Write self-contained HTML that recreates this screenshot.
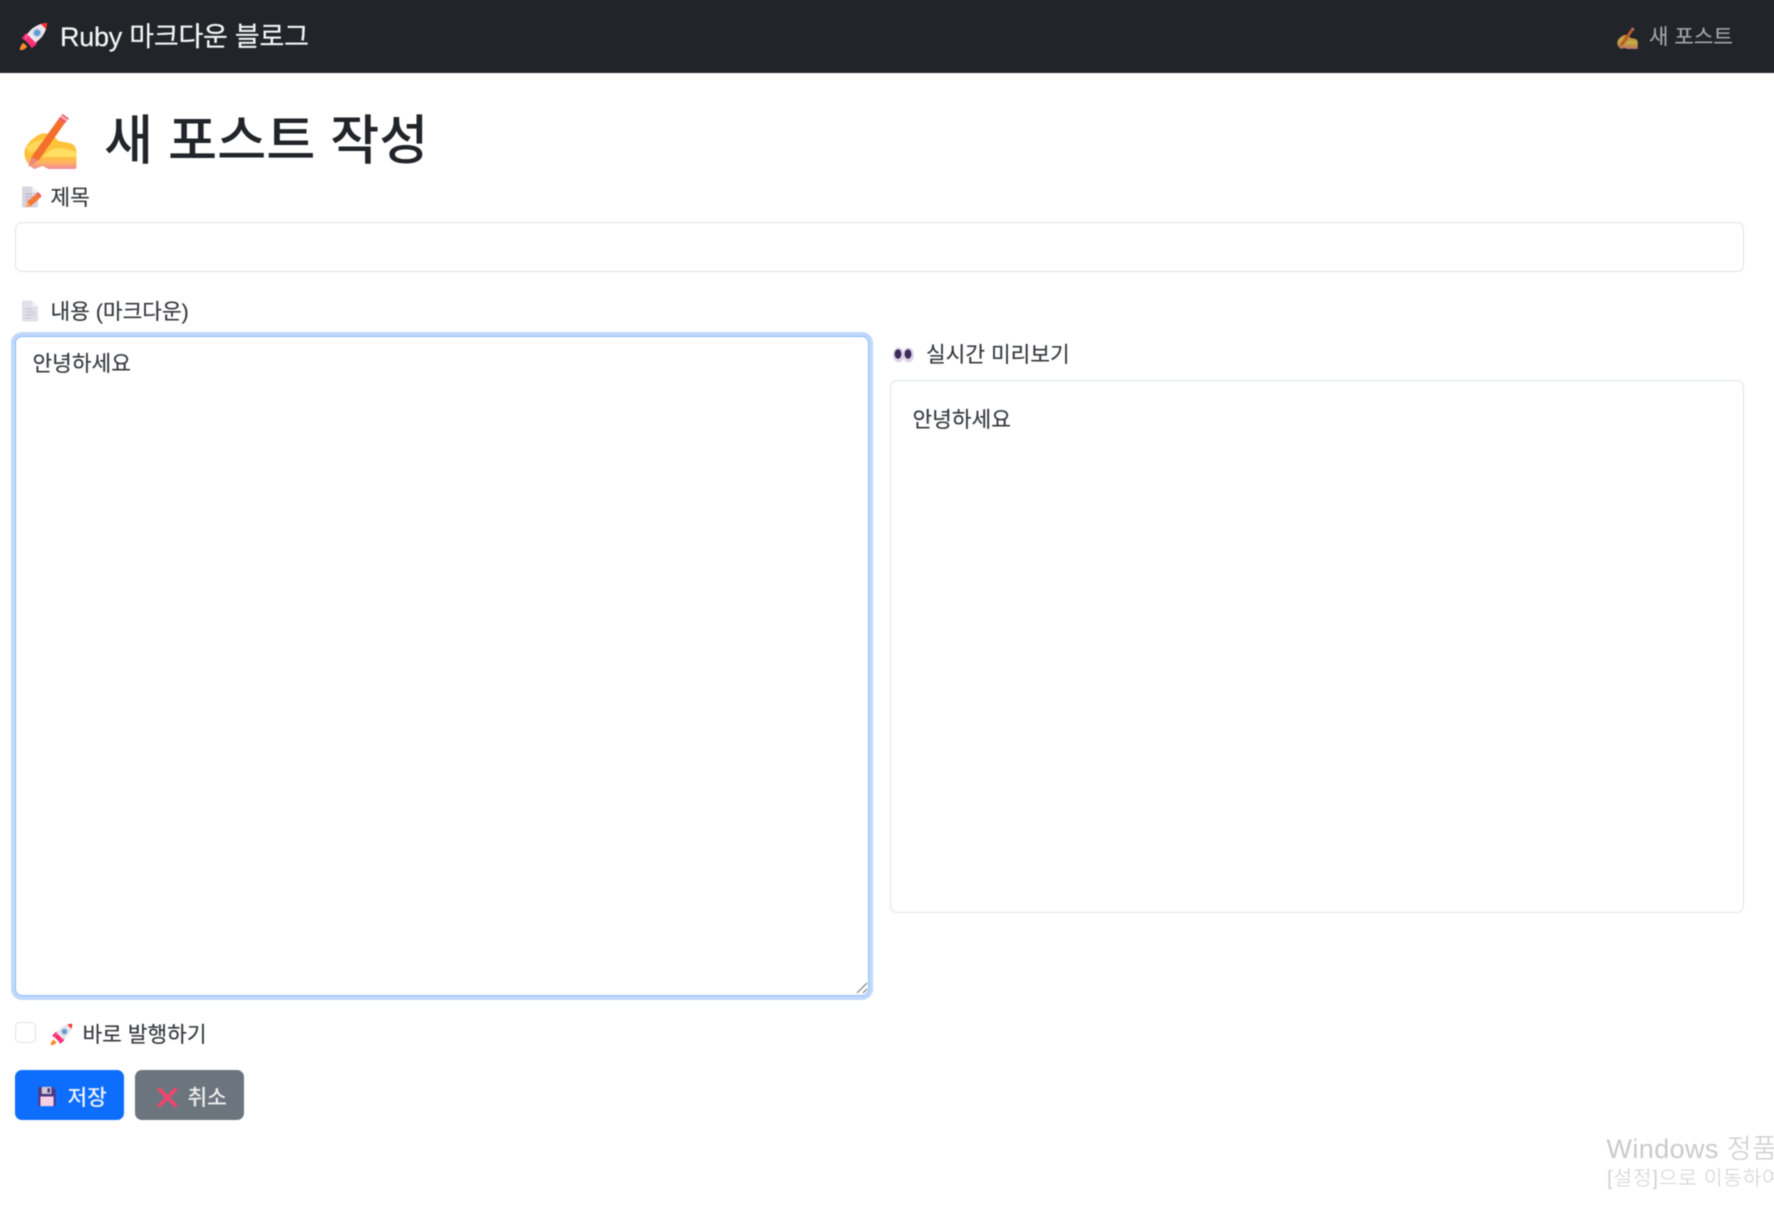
<!DOCTYPE html>
<html lang="ko">
<head>
<meta charset="utf-8">
<title>새 포스트 작성</title>
<style>
*{box-sizing:border-box}
html,body{margin:0;padding:0;background:#fff;width:1774px;height:1208px;overflow:hidden}
#root{font-family:"Liberation Sans","Noto Sans CJK KR",sans-serif;color:#212529;position:absolute;left:0;top:0;width:1774px;height:1208px;filter:blur(.45px)}
.a{position:absolute;white-space:nowrap;line-height:1}
nav{position:absolute;left:-10px;top:-10px;width:1794px;height:83px;background:#212529}
.box{position:absolute;background:#fff;border:1.5px solid #e0e3e6;border-radius:7px}
.btn{position:absolute;top:1070px;height:50px;width:109px;border-radius:7px}
svg{position:absolute;overflow:visible}
.t18{font-size:21.4px;color:#33383d;-webkit-text-stroke:.15px #33383d}
</style>
</head>
<body>
<div id="root">
<svg width="0" height="0" style="position:absolute">
<defs>
<linearGradient id="hg" x1="0" y1="0" x2="0" y2="1"><stop offset=".6" stop-color="#ffc23a"/><stop offset=".82" stop-color="#ffb45e"/><stop offset="1" stop-color="#f087a0"/></linearGradient>
<symbol id="rocket" viewBox="0 0 32 32">
<path d="M5 23c-3 2-4 5-4 8 3 0 6-1 8-4z" fill="#ff8a2b"/>
<path d="M7 13l7-2-6 10-5-3z" fill="#f7277a"/>
<path d="M19 25l2-7-10 6 3 5z" fill="#f7277a"/>
<path d="M6.500 20C9 10 18 2 31 1c-1 13-9 21-19 24.500z" fill="#e9e5ec"/>
<path d="M6.500 20c1-2 2-4 3-6l8.500 8.500c-2 1.200-4 2.200-6 3z" fill="#f92f70"/>
<path d="M24 2c2-.5 4-.8 7-1-.2 3-.5 5-1 7z" fill="#f8312f"/>
<circle cx="20" cy="12" r="4" fill="#5a9ad8" stroke="#b8c8dc" stroke-width="1.400"/>
</symbol>
<symbol id="hand" viewBox="0 0 56 56">
<path d="M2 38C4 30 13 22 21 20l9 2 6 6 11 2c5 1 7 5 7 10v14c0 1-1 2-2 2H26l-6-3-8 3C6 53 1 46 2 38z" fill="url(#hg)"/>
<path d="M20 44c5-6 11-9 17-9l12 2c3 1 5 2 5 5v2H28z" fill="#ffdf60"/>
<path d="M5 33c6-4 15-8 22-7 3 1 2 6-2 7l-15 6c-4 0-8-3-5-6z" fill="#ffd75a"/>
<path d="M6 54l3-10L36 6l6 4.500-26 37z" fill="#f3702c"/>
<path d="M36 6l4-5 6.500 4.500-4.500 5z" fill="#ef4f68"/>
<path d="M37.500 4l1.500-2 6.500 4.500-1.500 2z" fill="#f6b3a6"/>
<path d="M6 54l3-10 7 3.500z" fill="#e98a7d"/>
</symbol>
<symbol id="memo" viewBox="0 0 20 22">
<path d="M1 2c0-1 .5-1.500 1.500-1.500H11l6 6V20c0 1-.5 1.500-1.500 1.500h-13C1.500 21.500 1 21 1 20z" fill="#d9d5e0"/>
<path d="M11 .5l6 6h-5c-.6 0-1-.4-1-1z" fill="#f1eef4"/>
<path d="M4 8h7M4 11h9M4 14h5" stroke="#b4aec2" stroke-width="1"/>
<path d="M4 21l2-5 9-8 4 4-9 8z" fill="#f47a33"/>
<path d="M15 8l2-2 4 4-2 2z" fill="#f05a5e"/>
<path d="M4 21l2-5 3 3z" fill="#f3b08c"/>
</symbol>
<symbol id="doc" viewBox="0 0 18 22">
<path d="M1 2c0-1 .5-1.500 1.500-1.500H11l6 6V20c0 1-.5 1.500-1.500 1.500h-13C1.500 21.500 1 21 1 20z" fill="#e2dfe9"/>
<path d="M11 .5l6 6h-5c-.6 0-1-.4-1-1z" fill="#f3f1f6"/>
<path d="M4 9h7M4 12h10M4 15h10M4 18h6" stroke="#c5c0d2" stroke-width="1"/>
</symbol>
<symbol id="floppy" viewBox="0 0 22 24">
<path d="M1 2.500C1 1.500 1.500 1 2.500 1h15L21 4.500V21.500c0 1-.5 1.500-1.500 1.500h-17c-1 0-1.500-.5-1.500-1.500z" fill="#4d3a82"/>
<rect x="5" y="1" width="11" height="8" fill="#cfc9d8"/>
<rect x="11.500" y="2.500" width="3" height="5" fill="#4d3a82"/>
<rect x="3.500" y="12" width="15" height="11" fill="#f5cfe4"/>
</symbol>
</defs>
</svg>

<nav></nav>
<svg style="left:19px;top:22px" width="29" height="29"><use href="#rocket" width="29" height="29"/></svg>
<div class="a" style="left:60px;top:22px;font-size:27px;color:#f4f5f6;line-height:30px;letter-spacing:-.25px;-webkit-text-stroke:.2px #f4f5f6">Ruby 마크다운 블로그</div>
<svg style="left:1616px;top:27px;opacity:.72" width="23" height="22"><use href="#hand" width="23" height="22"/></svg>
<div class="a" style="left:1649px;top:25px;font-size:21.200px;color:#a3a7ab;line-height:26px;-webkit-text-stroke:.15px #a3a7ab">새 포스트</div>

<svg style="left:22px;top:113px" width="57" height="56"><use href="#hand" width="57" height="56"/></svg>
<div class="a" style="left:104px;top:108px;font-size:53.400px;font-weight:500;color:#212529;line-height:68px">새 포스트 작성</div>

<svg style="left:21px;top:186px" width="20" height="22"><use href="#memo" width="20" height="22"/></svg>
<div class="a t18" style="left:50.500px;top:184.500px;line-height:26px">제목</div>
<div class="box" style="left:15px;top:222px;width:1729px;height:50px"></div>

<svg style="left:21px;top:300px" width="18" height="22"><use href="#doc" width="18" height="22"/></svg>
<div class="a t18" style="left:50.500px;top:298.500px;line-height:26px">내용 (마크다운)</div>

<div class="a" style="left:11px;top:332px;width:862px;height:668px;background:#fff;border:5px solid #c0d8fc;border-radius:11px"></div>
<div class="a" style="left:15px;top:336px;width:854px;height:660px;background:#fff;border:1.500px solid #8fbcfd;border-radius:7px"></div>
<div class="a t18" style="left:32.500px;top:350.500px;line-height:26px">안녕하세요</div>
<svg style="left:855px;top:981px" width="14" height="14"><path d="M2 12L12 2M8 12l4-4" stroke="#7d7d7d" stroke-width="1.200" fill="none"/></svg>

<svg style="left:892px;top:346px" width="23" height="18" viewBox="0 0 23 18">
<ellipse cx="6.500" cy="9" rx="5.500" ry="7.500" fill="#dcd2e6"/><ellipse cx="16.500" cy="9" rx="5.500" ry="7.500" fill="#dcd2e6"/>
<ellipse cx="6" cy="8" rx="3.400" ry="4.800" fill="#402a5c"/><ellipse cx="16" cy="8" rx="3.400" ry="4.800" fill="#402a5c"/>
</svg>
<div class="a t18" style="left:926px;top:341.500px;line-height:26px">실시간 미리보기</div>
<div class="box" style="left:890px;top:380px;width:854px;height:533px"></div>
<div class="a t18" style="left:912.500px;top:406.500px;line-height:26px">안녕하세요</div>

<div class="a" style="left:15px;top:1022px;width:21px;height:21px;border:1.500px solid #dfe2e6;border-radius:5px;background:#fff"></div>
<svg style="left:50px;top:1023px" width="23" height="23"><use href="#rocket" width="23" height="23"/></svg>
<div class="a t18" style="left:82.500px;top:1021.500px;line-height:26px">바로 발행하기</div>

<div class="btn" style="left:15px;background:#0d6efd"></div>
<svg style="left:37px;top:1086px" width="20" height="21"><use href="#floppy" width="20" height="21"/></svg>
<div class="a" style="left:67.500px;top:1084.500px;font-size:21.400px;font-weight:500;color:#eef3fb;line-height:26px">저장</div>
<div class="btn" style="left:135px;background:#6c757d"></div>
<svg style="left:156px;top:1086px" width="23" height="23" viewBox="0 0 23 23"><path d="M2.500 2.500L20.500 20.500M20.500 2.500L2.500 20.500" stroke="#f4436c" stroke-width="3.600" fill="none"/></svg>
<div class="a" style="left:187.500px;top:1084.500px;font-size:21.400px;font-weight:500;color:#eceeef;line-height:26px">취소</div>

<div class="a" style="left:1606.500px;top:1132px;font-size:27px;font-weight:300;color:#cacaca;line-height:34px;letter-spacing:.4px">Windows 정품</div>
<div class="a" style="left:1607px;top:1165.500px;font-size:20.500px;font-weight:300;color:#d0d0d0;line-height:26px;letter-spacing:.6px">[설정]으로 이동하여</div>
</div>
</body>
</html>
